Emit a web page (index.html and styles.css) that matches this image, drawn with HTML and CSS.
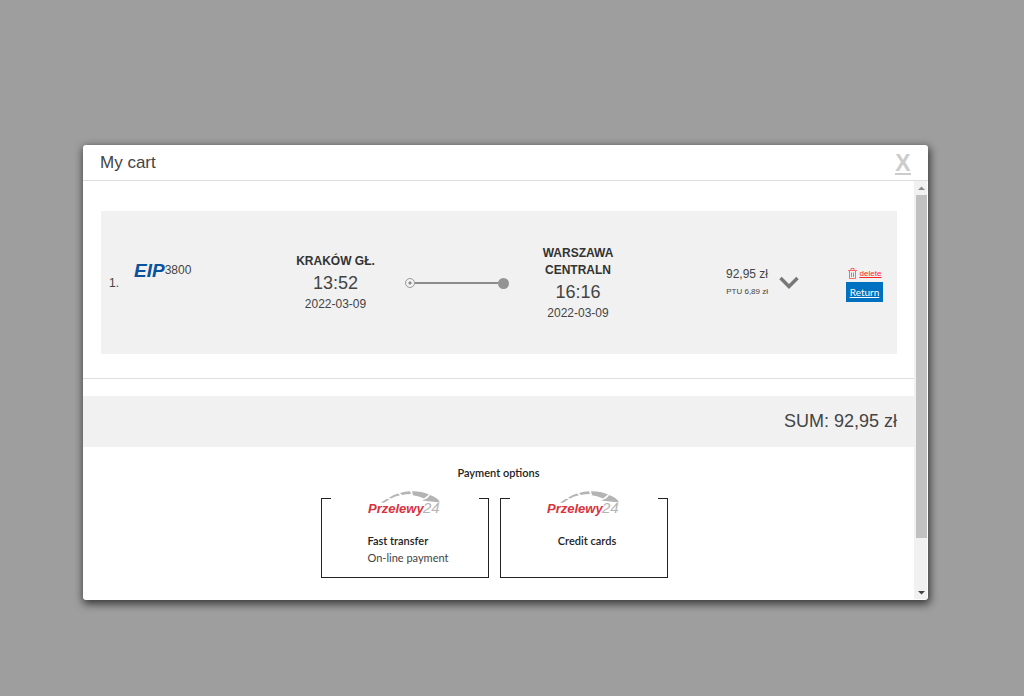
FILE: index.html
```
<!DOCTYPE html>
<html lang="en">
<head>
<meta charset="utf-8">
<title>My cart</title>
<link rel="stylesheet" href="styles.css">
</head>
<body>
<main class="dialog" role="dialog" aria-labelledby="title">
  <header class="dialog-head">
    <h1 id="title">My cart</h1>
    <button class="close" type="button" aria-label="Close">X</button>
  </header>
  <div class="dialog-body">
    <div class="content">
      <section class="ticket">
        <span>1.</span>
        <div class="train">
          <span class="eip">EIP</span><span>3800</span>
        </div>
        <div class="station">
          <strong>KRAKÓW GŁ.</strong>
          <time class="hour">13:52</time>
          <time>2022-03-09</time>
        </div>
        <div class="route"><span class="start"></span><span class="line"></span><span class="end"></span></div>
        <div class="station">
          <strong>WARSZAWA CENTRALN</strong>
          <time class="hour">16:16</time>
          <time>2022-03-09</time>
        </div>
        <div class="price">
          <span>92,95 zł</span>
          <small>PTU 6,89 zł</small>
        </div>
        <button class="expand" type="button" aria-label="Show details">
          <svg width="20" height="14" viewBox="0 0 20 14"><path d="M1.500 2 L10 10.500 L18.500 2" fill="none" stroke="#777" stroke-width="3.500"/></svg>
        </button>
        <div class="actions">
          <a class="delete" href="#delete">
            <svg width="9" height="11" viewBox="0 0 9 11"><path d="M0 2.500H9M3 2V.5H6V2M1.500 3V10.500H7.500V3M3.500 4.500V9M5.500 4.500V9" fill="none" stroke="#f44" stroke-width=".8"/></svg>
            <span>delete</span>
          </a>
          <a class="return" href="#return">Return</a>
        </div>
      </section>
      <div class="sum">SUM: 92,95 zł</div>
      <section class="payment">
        <h2>Payment options</h2>
        <div class="options">
          <button class="option" type="button">
            <svg class="logo" width="74" height="28" viewBox="0 0 74 28">
              <g fill="#b4b4b4">
                <path d="M13 12.500 L19 8.700 L21.500 9.200 L16 12.800Z"/>
                <path d="M21 7.700 Q25 5 30 3.500 L32 5.200 Q27 6.300 23 8.500Z"/>
                <path d="M32 3 Q37 1.200 42 1.200 L43 4 Q38 4 34 5Z"/>
                <path d="M44 1.200 Q53 1 61 4.500 L56 8.500 Q51 6 45 5.300Z"/>
                <path d="M62 5 Q70 7.500 72 12.500 L54 10.500 Q60 9 62 5Z"/>
              </g>
              <text class="p24-name" x="0" y="23">Przelewy</text>
              <text class="p24-number" x="55" y="23">24</text>
            </svg>
            <span class="label"><b>Fast transfer</b><span>On-line payment</span></span>
          </button>
          <button class="option" type="button">
            <svg class="logo" width="74" height="28" viewBox="0 0 74 28">
              <g fill="#b4b4b4">
                <path d="M13 12.500 L19 8.700 L21.500 9.200 L16 12.800Z"/>
                <path d="M21 7.700 Q25 5 30 3.500 L32 5.200 Q27 6.300 23 8.500Z"/>
                <path d="M32 3 Q37 1.200 42 1.200 L43 4 Q38 4 34 5Z"/>
                <path d="M44 1.200 Q53 1 61 4.500 L56 8.500 Q51 6 45 5.300Z"/>
                <path d="M62 5 Q70 7.500 72 12.500 L54 10.500 Q60 9 62 5Z"/>
              </g>
              <text class="p24-name" x="0" y="23">Przelewy</text>
              <text class="p24-number" x="55" y="23">24</text>
            </svg>
            <span class="label"><b>Credit cards</b></span>
          </button>
        </div>
      </section>
    </div>
    <div class="scrollbar" aria-hidden="true">
      <svg width="11" height="14" viewBox="0 0 11 14"><path d="M2 9L5.500 5.500L9 9Z" fill="#8b8b8b"/></svg>
      <div class="track"><div class="thumb"></div></div>
      <svg width="11" height="14" viewBox="0 0 11 14"><path d="M2 6L5.500 9.500L9 6Z" fill="#444"/></svg>
    </div>
  </div>
</main>
</body>
</html>
```
FILE: styles.css
```
* { box-sizing: border-box; }
body {
  margin: 0;
  padding: 145px 96px 64px 83px;
  background: #9e9e9e;
  color: #444;
  font: 12px/17px "Liberation Sans", Arial, sans-serif;
}
button { padding: 0; border: 0; background: none; color: inherit; font: inherit; cursor: pointer; }
.dialog { background: #fff; border-radius: 3px; box-shadow: 1px 3px 9px 1px rgba(0, 0, 0, .65); }
.dialog-head {
  display: flex;
  justify-content: space-between;
  align-items: center;
  height: 36px;
  padding: 0 17px;
  border-bottom: 1px solid #ddd;
}
h1 { margin: 0; font-size: 17px; font-weight: 400; line-height: 24px; }
.close {
  width: 16px;
  margin-top: 3px;
  border-bottom: 2px solid #ccc;
  color: #ccc;
  font-size: 23px;
  font-weight: 700;
  line-height: 20px;
}
.dialog-body { display: flex; padding: 0 1px 1px 0; }
.content { flex: 1; min-width: 0; }
.ticket {
  display: grid;
  grid-template-columns: 25fr 132fr 139fr 104fr 138fr 121fr 78fr 37fr;
  align-items: center;
  min-height: 143px;
  margin: 30px 17px 25px 18px;
  padding: 1px 14px 0 8px;
  background: #f1f1f1;
}
.train { display: flex; align-items: center; padding-bottom: 26px; }
.eip { color: #0b529c; font-size: 19px; font-weight: 700; font-style: italic; }
.station { display: flex; flex-direction: column; align-items: center; padding: 0 16px; text-align: center; }
.station strong { color: #333; }
.hour { font-size: 18px; line-height: 26px; }
.route { display: flex; align-items: center; }
.start { width: 10px; height: 10px; border: 1px solid #999; border-radius: 50%; background: radial-gradient(#888 1px, transparent 2px); }
.line { flex: 1; height: 2px; background: #8b8b8b; }
.end { width: 11px; height: 11px; border-radius: 50%; background: #949494; }
.price { display: flex; flex-direction: column; align-items: flex-end; }
.price small { font-size: 8px; }
.expand { display: flex; padding-left: 11px; }
.actions { display: flex; flex-direction: column; }
.delete { display: flex; align-items: center; justify-content: center; gap: 3px; color: #f22; font-size: 8px; }
.delete span { text-decoration: underline; }
.return { background: #0071c0; color: #fff; font: 10px/20px Lato, sans-serif; text-align: center; }
.sum {
  margin-bottom: 17px;
  padding-right: 17px;
  border-top: 17px solid #fff;
  background: #f1f1f1;
  box-shadow: 0 -1px #ddd;
  font-size: 18px;
  line-height: 51px;
  text-align: right;
}
.payment { padding-bottom: 21px; color: #222; font: 11px/17px Lato, sans-serif; }
h2 { margin: 0 0 17px; font-size: 11px; font-weight: 600; text-align: center; }
.options { display: flex; justify-content: center; gap: 11px; padding-right: 9px; }
.option {
  display: flex;
  flex-direction: column;
  align-items: center;
  justify-content: flex-start;
  width: 168px;
  height: 80px;
  border: solid #222;
  border-width: 0 1px 1px;
  background: linear-gradient(#222, #222) left top / 9px 1px no-repeat, linear-gradient(#222, #222) right top / 9px 1px no-repeat;
}
.logo { margin-top: -8px; }
.p24-name { fill: #d8323d; font: italic 700 13px "Liberation Sans", sans-serif; }
.p24-number { fill: #b4b4b4; font: italic 400 15px "Liberation Sans", sans-serif; }
.label { display: flex; flex-direction: column; margin: 14px 0 0 7px; text-align: left; }
.label b { font-weight: 600; }
.label span { color: #444; }
.scrollbar { display: flex; flex-direction: column; width: 13px; padding-left: 2px; background: #f1f1f1; }
.track { flex: 1; }
.thumb { height: 88%; background: #c1c1c1; }
```
